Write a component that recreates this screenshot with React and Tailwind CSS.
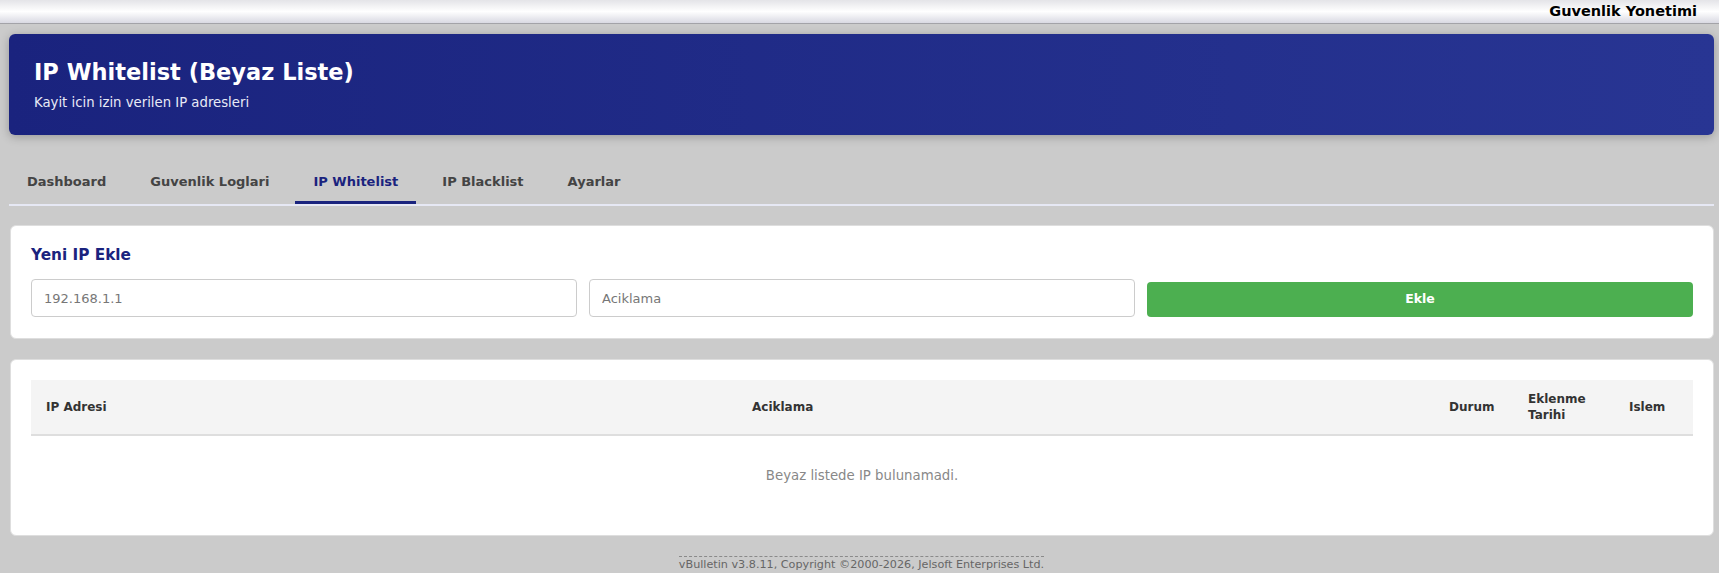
import React from 'react';

const tabs = ['Dashboard', 'Guvenlik Loglari', 'IP Whitelist', 'IP Blacklist', 'Ayarlar'];

const App = () => {
  return (
    <div className="min-h-[573px] bg-[#cbcbcb] font-['DejaVu_Sans',Verdana,sans-serif] text-[#333]">
      {/* Top strip */}
      <div className="h-[24px] bg-gradient-to-b from-[#e4e4e8] via-white to-[#d9d9e2] border-b border-[#a3a3a8] flex items-center justify-end pr-[22px]">
        <span className="text-[14.5px] font-bold text-black leading-none">Guvenlik Yonetimi</span>
      </div>

      <div className="pl-[9px] pr-[5px] pt-[10px]">
        {/* Header banner */}
        <div className="rounded-md bg-gradient-to-r from-[#1a237e] to-[#283593] px-[25px] pt-[25px] pb-[24px] shadow-[0_2px_10px_rgba(0,0,0,0.25)]">
          <h1 className="text-[22.5px] font-bold text-white leading-[26px] mb-[10px]">IP Whitelist (Beyaz Liste)</h1>
          <p className="text-[13.25px] text-[#e8eaf6] leading-4">Kayit icin izin verilen IP adresleri</p>
        </div>

        {/* Tabs */}
        <div className="mt-[27px] flex gap-[8px] border-b-2 border-[#e6e8f4]">
          {tabs.map((t) => (
            <div
              key={t}
              className={`px-[18px] pt-[12px] pb-[11px] text-[13px] font-bold leading-4 border-b-[3px] ${
                t === 'IP Whitelist' ? 'border-[#1a237e] text-[#1a237e]' : 'border-transparent text-[#444]'
              }`}
            >
              {t}
            </div>
          ))}
        </div>

        {/* Add form */}
        <div className="mt-[19px] ml-px bg-white rounded-md border border-[#dedede] px-[20px] pt-[20px] pb-[21px]">
          <h2 className="text-[15.3px] font-bold text-[#1a237e] leading-[19px] mb-[14px]">Yeni IP Ekle</h2>
          <div className="grid grid-cols-3 gap-[12px] items-end">
            <input
              placeholder="192.168.1.1"
              className="h-[38px] px-3 text-[13px] border border-[#ccc] rounded-[4px] placeholder:text-[#777] outline-none"
            />
            <input
              placeholder="Aciklama"
              className="h-[38px] px-3 text-[13px] border border-[#ccc] rounded-[4px] placeholder:text-[#777] outline-none"
            />
            <button className="h-[35px] rounded-[4px] bg-[#4caf50] text-white text-[12.5px] font-bold">Ekle</button>
          </div>
        </div>

        {/* List */}
        <div className="mt-[20px] ml-px bg-white rounded-md border border-[#dedede] p-[20px]">
          <table className="w-full table-fixed border-collapse">
            <colgroup>
              <col className="w-[706px]" />
              <col className="w-[697px]" />
              <col className="w-[79px]" />
              <col className="w-[101px]" />
              <col className="w-[79px]" />
            </colgroup>
            <thead>
              <tr className="bg-[#f4f4f4] border-b-2 border-[#dedede]">
                <th className="px-[15px] py-[11px] text-left text-[12px] font-bold leading-4">IP Adresi</th>
                <th className="px-[15px] py-[11px] text-left text-[12px] font-bold leading-4">Aciklama</th>
                <th className="px-[15px] py-[11px] text-left text-[12px] font-bold leading-4">Durum</th>
                <th className="px-[15px] py-[11px] text-left text-[12px] font-bold leading-4">Eklenme Tarihi</th>
                <th className="px-[15px] py-[11px] text-left text-[12px] font-bold leading-4">Islem</th>
              </tr>
            </thead>
            <tbody>
              <tr>
                <td colSpan={5} className="pt-[32px] pb-[31px] text-center text-[13.3px] leading-4 text-[#888]">
                  Beyaz listede IP bulunamadi.
                </td>
              </tr>
            </tbody>
          </table>
        </div>

        {/* Footer */}
        <div className="mt-[20px] flex justify-center">
          <div className="border-t border-dashed border-[#8a8a8a] text-[11.2px] text-[#666] leading-[16px]">
            vBulletin v3.8.11, Copyright ©2000-2026, Jelsoft Enterprises Ltd.
          </div>
        </div>
      </div>
    </div>
  );
};

export default App;
